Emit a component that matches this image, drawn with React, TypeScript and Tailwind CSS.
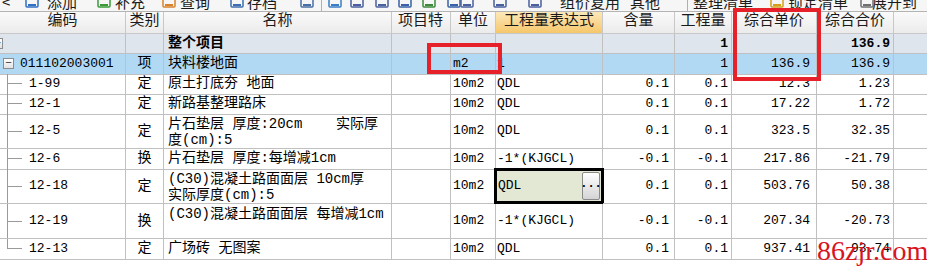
import type { ReactNode } from 'react'

const GRID = 'grid grid-cols-[126px_38px_228px_59px_45px_107px_72px_57px_85px_77px_1fr]'
const FONT = "font-['Liberation_Mono','Noto_Sans_CJK_SC',monospace]"
const CELL = 'flex overflow-hidden whitespace-pre border-r border-b border-[#c0c0c0]'

type Row = {
	code: string
	kind: string
	name: string[]
	unit: string
	expr: string
	qty1: string
	qty2: string
	price: string
	total: string
	tall?: boolean
	last?: boolean
	edit?: boolean
}

const rows: Row[] = [
	{ code: '1-99', kind: '定', name: ['原土打底夯 地面'], unit: '10m2', expr: 'QDL', qty1: '0.1', qty2: '0.1', price: '12.3', total: '1.23' },
	{ code: '12-1', kind: '定', name: ['新路基整理路床'], unit: '10m2', expr: 'QDL', qty1: '0.1', qty2: '0.1', price: '17.22', total: '1.72' },
	{ code: '12-5', kind: '定', name: ['片石垫层 厚度:20cm    实际厚', '度(cm):5'], unit: '10m2', expr: 'QDL', qty1: '0.1', qty2: '0.1', price: '323.5', total: '32.35', tall: true },
	{ code: '12-6', kind: '换', name: ['片石垫层 厚度:每增减1cm'], unit: '10m2', expr: '-1*(KJGCL)', qty1: '-0.1', qty2: '-0.1', price: '217.86', total: '-21.79' },
	{ code: '12-18', kind: '定', name: ['(C30)混凝土路面面层 10cm厚', '实际厚度(cm):5'], unit: '10m2', expr: 'QDL', qty1: '0.1', qty2: '0.1', price: '503.76', total: '50.38', tall: true, edit: true },
	{ code: '12-19', kind: '换', name: ['(C30)混凝土路面面层 每增减1cm'], unit: '10m2', expr: '-1*(KJGCL)', qty1: '-0.1', qty2: '-0.1', price: '207.34', total: '-20.73', tall: true },
	{ code: '12-13', kind: '定', name: ['广场砖 无图案'], unit: '10m2', expr: 'QDL', qty1: '0.1', qty2: '0.1', price: '937.41', total: '93.74', last: true },
]

function Icon({ color }: { color: string }) {
	return (
		<svg width="14" height="14" viewBox="0 0 14 14" className="shrink-0">
			<rect x="1" y="2" width="12" height="10" rx="1" fill="none" stroke={color} strokeWidth="1.5" />
			<rect x="3" y="9" width="8" height="2" fill={color} />
		</svg>
	)
}

function Tool({ w, children }: { w: string; children: ReactNode }) {
	return <div className={`flex shrink-0 items-center ${w}`}>{children}</div>
}

function Toolbar() {
	return (
		<div className="h-[12px] overflow-hidden border-b border-[#b4b4b4] bg-[#f6f6f6]">
			<div className="-mt-[8px] flex h-[20px] items-center pl-[2px] text-[15px] text-[#1c1c1c] font-['Noto_Sans_CJK_SC',sans-serif]">
				<Tool w="w-[23px]">&lt;</Tool>
				<Tool w="w-[22px]"><Icon color="#2f6fc4" /></Tool>
				<Tool w="w-[50px]">添加</Tool>
				<Tool w="w-[18px]"><Icon color="#3a9a3a" /></Tool>
				<Tool w="w-[47px]">补充</Tool>
				<Tool w="w-[18px]"><Icon color="#d9822b" /></Tool>
				<Tool w="w-[50px]">查询</Tool>
				<Tool w="w-[17px]"><Icon color="#3d6fb0" /></Tool>
				<Tool w="w-[53px]">存档</Tool>
				<Tool w="w-[21px]"><Icon color="#4a6fa5" /></Tool>
				<Tool w="w-[7px]"><div className="h-[20px] w-px bg-[#b0b0b0]" /></Tool>
				<Tool w="w-[22px]"><Icon color="#3b7dc4" /></Tool>
				<Tool w="w-[25px]"><Icon color="#4a5fa0" /></Tool>
				<Tool w="w-[23px]"><Icon color="#4a5fa0" /></Tool>
				<Tool w="w-[24px]"><Icon color="#3b62a8" /></Tool>
				<Tool w="w-[25px]"><Icon color="#3c8a3c" /></Tool>
				<Tool w="w-[13px]"><Icon color="#3b62a8" /></Tool>
				<Tool w="w-[33px]"><Icon color="#4a5fa0" /></Tool>
				<Tool w="w-[35px]"><Icon color="#4a5fa0" /></Tool>
				<Tool w="w-[32px]"><Icon color="#4a5fa0" /></Tool>
				<Tool w="w-[70px]">组价复用</Tool>
				<Tool w="w-[57px]">其他</Tool>
				<Tool w="w-[6px]"><div className="h-[20px] w-px bg-[#b0b0b0]" /></Tool>
				<Tool w="w-[77px]">整理清单</Tool>
				<Tool w="w-[18px]"><Icon color="#d4a017" /></Tool>
				<Tool w="w-[72px]">锁定清单</Tool>
				<Tool w="w-[12px]"><Icon color="#707070" /></Tool>
				<Tool w="w-[60px]">展开到</Tool>
			</div>
		</div>
	)
}

function Header() {
	const th = 'flex items-center overflow-hidden whitespace-nowrap border-r border-b border-[#c8c8c8] bg-gradient-to-b from-[#fafafa] to-[#ebebeb]'
	return (
		<div className={`${GRID} h-[22px] text-[15px] text-[#1a1a1a]`}>
			<div className={`${th} justify-center`}>编码</div>
			<div className={`${th} justify-center`}>类别</div>
			<div className={`${th} justify-center`}>名称</div>
			<div className={`${th} pl-[6px]`}>项目特</div>
			<div className={`${th} justify-center`}>单位</div>
			<div className={`${th} justify-center bg-gradient-to-b from-[#fde8b8] to-[#f5c76a]`}>工程量表达式</div>
			<div className={`${th} justify-center`}>含量</div>
			<div className={`${th} justify-center`}>工程量</div>
			<div className={`${th} justify-center`}>综合单价</div>
			<div className={`${th} justify-center`}>综合合价</div>
			<div className="border-b border-[#c8c8c8] bg-gradient-to-b from-[#fafafa] to-[#ebebeb]" />
		</div>
	)
}

function Box({ sign, extra }: { sign: string; extra: string }) {
	return (
		<div className={`flex h-[11px] w-[11px] shrink-0 items-center justify-center border border-[#8c8c8c] bg-gradient-to-b from-white to-[#e2e2e2] text-[11px] leading-none text-[#333] ${extra}`}>
			{sign}
		</div>
	)
}

function Tree({ last }: { last?: boolean }) {
	if (last) {
		return (
			<div className="ml-[7px] flex w-[15px] shrink-0 flex-col self-stretch">
				<div className="h-1/2 border-b border-l border-[#9a9a9a]" />
			</div>
		)
	}
	return (
		<div className="ml-[7px] flex w-[15px] shrink-0 items-center self-stretch border-l border-[#9a9a9a]">
			<div className="h-px w-full bg-[#9a9a9a]" />
		</div>
	)
}

function EditCell({ text }: { text: string }) {
	return (
		<div className="flex items-center border-[3px] border-black bg-[#e3e8d5] pl-[1px] -mt-px -ml-[2px] -mr-px">
			<span className="flex-1">{text}</span>
			<div className="mr-px flex h-[28px] w-[18px] items-center justify-center rounded-[2px] border border-[#8a8a8a] bg-gradient-to-b from-white to-[#d4d4d4] pb-[4px] text-[12px] font-bold leading-none">
				...
			</div>
		</div>
	)
}

function DataRow({ r }: { r: Row }) {
	const h = r.tall ? 'h-[35px]' : 'h-[20px]'
	const num = `${CELL} items-center justify-end pr-[3px]`
	return (
		<div className={`${GRID} ${h} text-[13px]`}>
			<div className={`flex items-center border-r border-b border-[#c0c0c0]`}>
				<Tree last={r.last} />
				<span className="pl-[7px]">{r.code}</span>
			</div>
			<div className={`${CELL} items-center justify-center text-[14px]`}>{r.kind}</div>
			<div className={`${CELL} flex-col pl-[4px] text-[14px] ${r.tall ? 'justify-start pt-[2px] leading-[16px]' : 'justify-center'}`}>
				{r.name.map(l => (
					<span key={l}>{l}</span>
				))}
			</div>
			<div className={CELL} />
			<div className={`${CELL} items-center pl-[2px]`}>{r.unit}</div>
			{r.edit ? (
				<EditCell text={r.expr} />
			) : (
				<div className={`${CELL} items-center pl-[1px]`}>{r.expr}</div>
			)}
			<div className={`${num} pr-[5px]`}>{r.qty1}</div>
			<div className={num}>{r.qty2}</div>
			<div className={`${num} pr-[6px]`}>{r.price}</div>
			<div className={num}>{r.total}</div>
			<div className="border-b border-[#c0c0c0]" />
		</div>
	)
}

export default function App() {
	return (
		<div className={`relative h-[266px] w-[927px] overflow-hidden bg-white text-black ${FONT}`}>
			<Toolbar />
			<Header />

			<div className={`${GRID} h-[20px] bg-[#dfe5ed] text-[13px] font-bold`}>
				<div className="flex items-center overflow-hidden border-r border-b border-[#c0c0c0]">
					<Box sign="+" extra="-ml-[8px]" />
				</div>
				<div className={CELL} />
				<div className={`${CELL} items-center pl-[4px] text-[14px]`}>整个项目</div>
				<div className={CELL} />
				<div className={CELL} />
				<div className={CELL} />
				<div className={CELL} />
				<div className={`${CELL} items-center justify-end pr-[3px]`}>1</div>
				<div className={CELL} />
				<div className={`${CELL} items-center justify-end pr-[3px]`}>136.9</div>
				<div className="border-b border-[#c0c0c0]" />
			</div>

			<div className={`${GRID} h-[20px] bg-[#b1d9f4] text-[13px]`}>
				<div className="flex items-center border-r border-b border-[#c0c0c0]">
					<Box sign="−" extra="ml-[3px]" />
					<span className="pl-[6px]">011102003001</span>
				</div>
				<div className={`${CELL} items-center justify-center text-[14px]`}>项</div>
				<div className={`${CELL} items-center pl-[4px] text-[14px]`}>块料楼地面</div>
				<div className={CELL} />
				<div className={`${CELL} items-center pl-[2px]`}>m2</div>
				<div className={`${CELL} items-center pl-[1px]`}>1</div>
				<div className={CELL} />
				<div className={`${CELL} items-center justify-end pr-[3px]`}>1</div>
				<div className={`${CELL} items-center justify-end pr-[6px]`}>136.9</div>
				<div className={`${CELL} items-center justify-end pr-[3px]`}>136.9</div>
				<div className="border-b border-[#c0c0c0]" />
			</div>

			{rows.map(r => (
				<DataRow key={r.code} r={r} />
			))}

			<div className="pointer-events-none absolute left-[427px] top-[43px] h-[31px] w-[75px] border-[4px] border-[#e6212a]" />
			<div className="pointer-events-none absolute left-[733px] top-[8px] h-[73px] w-[88px] border-[4px] border-[#e6212a]" />
			<div className="pointer-events-none absolute left-[817px] top-[237px] whitespace-nowrap text-[28px] leading-[28px] text-[#d8141e] font-['Liberation_Serif',serif]">
				86zjr.com
			</div>
		</div>
	)
}
